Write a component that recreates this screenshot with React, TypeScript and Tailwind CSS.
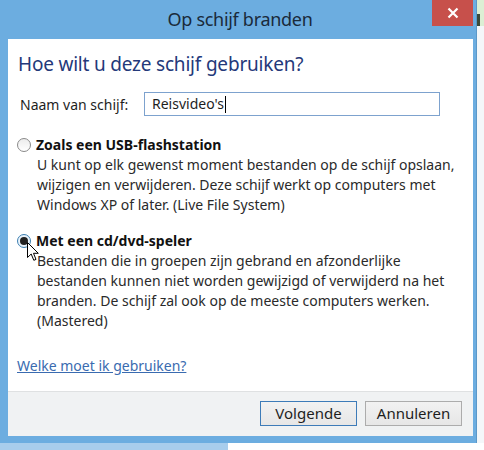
import React from "react";

const font = { fontFamily: '"Noto Sans", "Open Sans", sans-serif' };

function Radio({ checked }: { checked?: boolean }) {
  return (
    <div
      className={
        "w-[14px] h-[14px] rounded-full border flex items-center justify-center shrink-0 " +
        (checked
          ? "border-[#3c7fb1] bg-[#eaf3fb]"
          : "border-[#8a8a8a] bg-gradient-to-b from-[#ececec] to-[#ffffff]")
      }
    >
      {checked && <div className="w-[8px] h-[8px] rounded-full bg-[#222]" />}
    </div>
  );
}

function Cursor() {
  return (
    <svg
      className="absolute left-[27px] top-[242px]"
      width="13"
      height="20"
      viewBox="0 0 13 20"
    >
      <path
        d="M0.5 0.5 L0.5 15.5 L4.2 12 L6.8 18.3 L9 17.4 L6.5 11.3 L11.3 11.3 Z"
        fill="#fff"
        stroke="#000"
        strokeWidth="1"
      />
    </svg>
  );
}

export default function App() {
  return (
    <div className="relative w-[484px] h-[450px] bg-white overflow-hidden" style={font}>
      <div className="flex w-[484px] h-[443px]">
        {/* window */}
        <div className="w-[477px] h-[443px] bg-[#6cade0] flex flex-col border-r border-[#5b98c8]">
          {/* title bar */}
          <div className="relative h-[39px] flex items-center justify-center">
            <span className="text-[18px] text-[#1a2a3a] leading-none -mt-[1px] tracking-[-0.3px] ml-[4px]">
              Op schijf branden
            </span>
            <div className="absolute right-[3px] top-0 w-[41px] h-[26px] bg-[#c7504b] flex items-center justify-center">
              <svg width="12" height="12" viewBox="0 0 12 12">
                <path d="M1.5 1.5 L10.5 10.5 M10.5 1.5 L1.5 10.5" stroke="#fff" strokeWidth="2.2" />
              </svg>
            </div>
          </div>
          {/* content */}
          <div className="ml-[8px] mr-[3px] h-[397px] flex flex-col bg-white">
            <div className="h-[352px] pl-[10px] pt-[11px] flex flex-col whitespace-nowrap">
              <div className="text-[19px] leading-[28px] tracking-[-0.2px] text-[#24397a]">
                Hoe wilt u deze schijf gebruiken?
              </div>
              <div className="flex items-center mt-[14px] h-[24px]">
                <span className="text-[14px] text-[#1e1e1e] ml-[2px] w-[124px]">Naam van schijf:</span>
                <div className="w-[296px] h-[24px] border border-[#7da2ce] flex items-center pl-[7px]">
                  <span className="text-[14px] text-[#1e1e1e] leading-none">Reisvideo's</span>
                  <div className="w-[1px] h-[17px] bg-black ml-[1px]" />
                </div>
              </div>
              {/* option 1 */}
              <div className="mt-[18px] flex items-center h-[21px] gap-[5px] -ml-[1px]">
                <Radio />
                <span className="text-[14px] font-bold text-[#111]">Zoals een USB-flashstation</span>
              </div>
              <div className="pl-[19px] text-[14px] leading-[20px] text-[#2a2a2a]">
                U kunt op elk gewenst moment bestanden op de schijf opslaan,
                <br />
                wijzigen en verwijderen. Deze schijf werkt op computers met
                <br />
                Windows XP of later. (Live File System)
              </div>
              {/* option 2 */}
              <div className="mt-[15px] flex items-center h-[21px] gap-[5px] -ml-[1px]">
                <Radio checked />
                <span className="text-[14px] font-bold text-[#111]">Met een cd/dvd-speler</span>
              </div>
              <div className="pl-[19px] text-[14px] leading-[20px] text-[#2a2a2a]">
                Bestanden die in groepen zijn gebrand en afzonderlijke
                <br />
                bestanden kunnen niet worden gewijzigd of verwijderd na het
                <br />
                branden. De schijf zal ook op de meeste computers werken.
                <br />
                (Mastered)
              </div>
              <div className="mt-[25px] text-[14px] leading-[20px] text-[#3a6bb0] underline -ml-[1px]">
                Welke moet ik gebruiken?
              </div>
            </div>
            {/* footer */}
            <div className="h-[45px] border-t border-[#dfe1e2] bg-[#f0f2f3] flex justify-end items-start pt-[9px] pr-[11px] gap-[8px]">
              <div className="w-[97px] h-[25px] border border-[#3d7bb8] bg-gradient-to-b from-[#f2f2f2] to-[#e6e6e6] flex items-center justify-center text-[15px] text-[#1e1e1e]">
                Volgende
              </div>
              <div className="w-[97px] h-[25px] border border-[#acacac] bg-gradient-to-b from-[#f2f2f2] to-[#e6e6e6] flex items-center justify-center text-[15px] text-[#1e1e1e]">
                Annuleren
              </div>
            </div>
          </div>
        </div>
        {/* background strip on the right */}
        <div className="flex-1 flex flex-col">
          <div className="h-[14px] bg-[#dcefd4]" />
          <div className="h-[12px] bg-[#dcefd4] border-l-[3px] border-[#3a4a3a]" />
          <div className="flex-1 bg-[#f4f7f9]" />
        </div>
      </div>
      <div className="flex h-[7px]">
        <div className="w-[228px] bg-[#a8cdec]" />
        <div className="flex-1 bg-white" />
      </div>
      <Cursor />
    </div>
  );
}
